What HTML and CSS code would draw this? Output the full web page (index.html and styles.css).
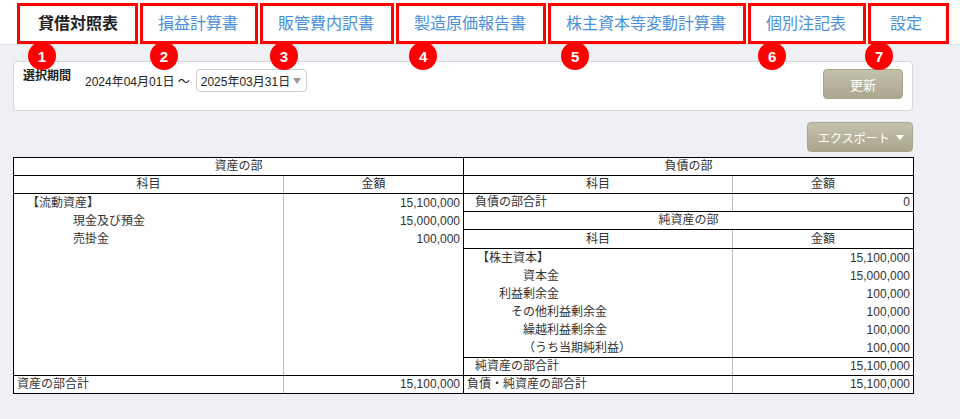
FILE: index.html
```html
<!DOCTYPE html>
<html lang="ja">
<head>
    <meta charset="UTF-8">
    <title>貸借対照表</title>
    <link rel="stylesheet" href="styles.css">
</head>
<body>
    <!-- Report tabs -->
    <header class="tabbar">
        <nav class="tabs">
            <a href="#" class="tab active">貸借対照表<span class="tab-mark">1</span></a>
            <a href="#" class="tab">損益計算書<span class="tab-mark">2</span></a>
            <a href="#" class="tab">販管費内訳書<span class="tab-mark">3</span></a>
            <a href="#" class="tab">製造原価報告書<span class="tab-mark mark-wide">4</span></a>
            <a href="#" class="tab">株主資本等変動計算書<span class="tab-mark mark-wide">5</span></a>
            <a href="#" class="tab">個別注記表<span class="tab-mark">6</span></a>
            <a href="#" class="tab tab-settings">設定<span class="tab-mark mark-near">7</span></a>
        </nav>
    </header>

    <main class="content">
        <!-- Period filter -->
        <section class="period-panel">
            <div class="period-label">選択期間</div>
            <div class="period-range">
                <span class="period-from">2024年04月01日 〜</span>
                <span class="date-select">2025年03月31日<i class="caret"></i></span>
            </div>
            <button class="btn btn-update">更新</button>
        </section>

        <div class="toolbar">
            <button class="btn btn-export">エクスポート<i class="caret caret-white"></i></button>
        </div>

        <!-- Balance sheet -->
        <div class="bs">
            <div class="bs-side assets">
                <div class="bs-title">資産の部</div>
                <div class="bs-row head"><span>科目</span><span>金額</span></div>
                <div class="bs-row"><span class="ind2">【流動資産】</span><span class="amt">15,100,000</span></div>
                <div class="bs-row"><span class="ind5">現金及び預金</span><span class="amt">15,000,000</span></div>
                <div class="bs-row"><span class="ind5">売掛金</span><span class="amt">100,000</span></div>
                <div class="bs-row fill"><span></span><span></span></div>
                <div class="bs-row total"><span class="ind0">資産の部合計</span><span class="amt">15,100,000</span></div>
            </div>

            <div class="bs-side liabilities">
                <div class="bs-title">負債の部</div>
                <div class="bs-row head"><span>科目</span><span>金額</span></div>
                <div class="bs-row closed"><span class="ind1">負債の部合計</span><span class="amt">0</span></div>
                <div class="bs-title">純資産の部</div>
                <div class="bs-row head head-tall"><span>科目</span><span>金額</span></div>
                <div class="bs-row"><span class="ind2">【株主資本】</span><span class="amt">15,100,000</span></div>
                <div class="bs-row"><span class="ind5">資本金</span><span class="amt">15,000,000</span></div>
                <div class="bs-row"><span class="ind3">利益剰余金</span><span class="amt">100,000</span></div>
                <div class="bs-row"><span class="ind4">その他利益剰余金</span><span class="amt">100,000</span></div>
                <div class="bs-row"><span class="ind5">繰越利益剰余金</span><span class="amt">100,000</span></div>
                <div class="bs-row"><span class="ind5">（うち当期純利益）</span><span class="amt">100,000</span></div>
                <div class="bs-row total"><span class="ind1">純資産の部合計</span><span class="amt">15,100,000</span></div>
                <div class="bs-row total"><span class="ind0">負債・純資産の部合計</span><span class="amt">15,100,000</span></div>
            </div>
        </div>
    </main>
</body>
</html>
```

FILE: styles.css
```css
* {
    margin: 0;
    padding: 0;
    box-sizing: border-box;
}

body {
    font-family: "Liberation Sans", "Noto Sans CJK JP", sans-serif;
    font-size: 12px;
    color: #333;
    background: #eff0f4;
}

/* Tabs */
.tabbar {
    height: 45px;
    padding-left: 17px;
    background: #fff;
    border-bottom: 1px solid #e0e2e7;
}

.tabs {
    display: flex;
    gap: 2px;
    padding-top: 3px;
}

.tab {
    position: relative;
    display: flex;
    align-items: center;
    height: 41px;
    padding: 0 17px 4px 15px;
    border: 3px solid #f00;
    font-size: 16px;
    color: #4a90d9;
    text-decoration: none;
}

.tab.active {
    padding-left: 18px;
    color: #222;
    font-weight: bold;
}

.tab-settings {
    padding-left: 19px;
    padding-right: 24px;
}

/* numbered callouts */
.tab-mark {
    position: absolute;
    top: 36px;
    left: 7px;
    width: 28px;
    height: 28px;
    border-radius: 50%;
    background: #f00;
    color: #fff;
    font-size: 15px;
    font-weight: bold;
    display: flex;
    align-items: center;
    justify-content: center;
    z-index: 2;
}

.tab.active .tab-mark { left: 8px; }
.tab-mark.mark-wide { left: 10px; }
.tab-mark.mark-near { left: -6px; }

/* Main content */
.content {
    width: 900px;
    margin-left: 13px;
    padding-top: 16px;
}

.period-panel {
    display: flex;
    align-items: flex-start;
    height: 50px;
    padding: 7px 9px 0 9px;
    background: #fff;
    border: 1px solid #d6d6d6;
    border-radius: 4px;
}

.period-label {
    width: 48px;
    margin-right: 14px;
    font-weight: bold;
    line-height: 14px;
    color: #222;
}

.period-range {
    display: flex;
    align-items: center;
    height: 23px;
    color: #222;
}

.period-from {
    margin-right: 6px;
}

.date-select {
    display: flex;
    align-items: center;
    height: 23px;
    padding: 0 5px 0 4px;
    border: 1px solid #ccc;
    border-radius: 4px;
}

.caret {
    display: inline-block;
    flex: none;
    width: 0;
    height: 0;
    margin-left: 3px;
    margin-top: 1px;
    border-left: 4px solid transparent;
    border-right: 4px solid transparent;
    border-top: 6px solid #999;
}

.caret-white {
    margin-left: 6px;
    border-top-color: #fff;
    border-top-width: 5px;
}

.btn {
    height: 30px;
    border: 1px solid #a8a48c;
    border-radius: 4px;
    background: linear-gradient(#c4c1ad, #aaa68e);
    color: #fff;
    font-family: inherit;
    font-size: 13px;
    white-space: nowrap;
    cursor: pointer;
}

.btn-update {
    width: 80px;
    margin-left: auto;
}

.toolbar {
    display: flex;
    justify-content: flex-end;
    margin-top: 11px;
}

.btn-export {
    display: flex;
    align-items: center;
    width: 106px;
    padding: 0 8px 0 10px;
    font-size: 12px;
}

/* Balance sheet */
.bs {
    display: flex;
    margin-top: 5px;
    width: 901px;
    background: #fff;
    border: 1px solid #000;
}

.bs-side {
    display: flex;
    flex-direction: column;
}

.bs-side.assets {
    width: 450px;
    border-right: 1px solid #000;
}

.bs-side.liabilities {
    flex: 1;
}

.bs-title {
    height: 18px;
    line-height: 17px;
    text-align: center;
    border-bottom: 1px solid #000;
}

.bs-row {
    display: grid;
    grid-template-columns: 270px 1fr;
    height: 18px;
    line-height: 18px;
    white-space: nowrap;
}

.liabilities .bs-row {
    grid-template-columns: 269px 1fr;
}

.bs-row > span:first-child {
    border-right: 1px solid #bbb;
}

.bs-row.head {
    text-align: center;
    line-height: 17px;
    border-bottom: 1px solid #000;
}

.bs-row.head-tall {
    height: 19px;
    line-height: 18px;
}

.bs-row.closed {
    line-height: 17px;
    border-bottom: 1px solid #000;
}

.bs-row.fill {
    flex: 1;
    height: auto;
}

.bs-row.total {
    line-height: 17px;
    border-top: 1px solid #000;
}

.amt {
    text-align: right;
    padding-right: 3px;
}

.ind0 { padding-left: 3px; }
.ind1 { padding-left: 11px; }
.ind2 { padding-left: 13px; }
.ind3 { padding-left: 35px; }
.ind4 { padding-left: 47px; }
.ind5 { padding-left: 59px; }
```
